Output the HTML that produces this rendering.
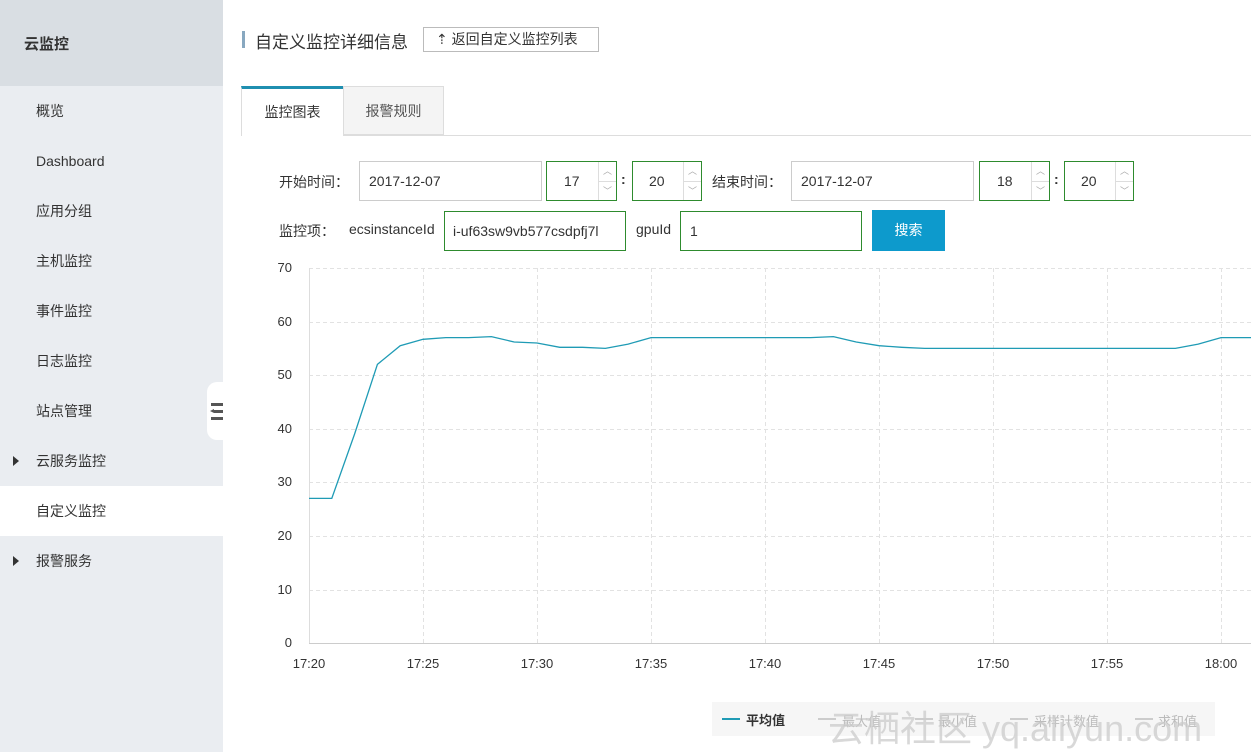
<!DOCTYPE html>
<html><head><meta charset="utf-8"><style>
*{margin:0;padding:0;box-sizing:border-box}
body{width:1251px;height:752px;overflow:hidden;background:#fff;font-family:"Liberation Sans","Noto Sans CJK SC",sans-serif;color:#333;position:relative;font-size:14px}
.abs{position:absolute}
#side{left:0;top:0;width:223px;height:752px;background:#eaedf1}
#side .hd{position:absolute;left:0;top:0;width:223px;height:86px;background:#d9dee3;font-size:15px;font-weight:bold;color:#333;padding:33px 0 0 24px}
.it{position:absolute;left:0;width:223px;height:50px;line-height:50px;padding-left:36px;font-size:14px;color:#333}
.it.act{background:#fff}
.tri{position:absolute;left:13px;top:20px;width:0;height:0;border-left:6px solid #333;border-top:5px solid transparent;border-bottom:5px solid transparent}
.box{position:absolute;border:1px solid #ccc;background:#fff;font-size:14px;color:#333;padding-left:9px}
.g{border-color:#2e8b2e}
.spin{position:absolute;right:0;top:0;width:18px;height:100%;border-left:1px solid #ddd;font-size:9px;color:#aaa;text-align:center}
.lbl{position:absolute;font-size:14px;color:#333}
.yl{position:absolute;left:270px;width:22px;text-align:right;font-size:13px;color:#333}
.xl{position:absolute;top:656px;font-size:13px;color:#333;width:50px;text-align:center}
.lg{position:absolute;top:711px;font-size:13px;color:#bbb}
.ll{position:absolute;top:718px;width:18px;height:2px;background:#ccc}
</style></head><body>
<div id="side" class="abs">
<div class="hd">云监控</div>
<div class="it" style="top:86px">概览</div>
<div class="it" style="top:136px">Dashboard</div>
<div class="it" style="top:186px">应用分组</div>
<div class="it" style="top:236px">主机监控</div>
<div class="it" style="top:286px">事件监控</div>
<div class="it" style="top:336px">日志监控</div>
<div class="it" style="top:386px">站点管理</div>
<div class="it" style="top:436px"><span class="tri"></span>云服务监控</div>
<div class="it act" style="top:486px">自定义监控</div>
<div class="it" style="top:536px"><span class="tri"></span>报警服务</div>
</div>
<div class="abs" style="left:207px;top:382px;width:20px;height:58px;background:#fff;border-radius:10px 0 0 10px"></div>
<div class="abs" style="left:211px;top:403px;width:12px;height:3px;background:#555"></div>
<div class="abs" style="left:214px;top:410px;width:9px;height:3px;background:#555"></div>
<div class="abs" style="left:210px;top:409px;width:0;height:0;border-right:4px solid #555;border-top:2.5px solid transparent;border-bottom:2.5px solid transparent"></div>
<div class="abs" style="left:211px;top:417px;width:12px;height:3px;background:#555"></div>

<div class="abs" style="left:242px;top:31px;width:3px;height:17px;background:#88a8c0"></div>
<div class="abs" style="left:255px;top:28px;font-size:17px;color:#333">自定义监控详细信息</div>
<div class="abs" style="left:423px;top:27px;width:176px;height:25px;border:1px solid #bbb;font-size:14px;line-height:23px;padding-left:12px;color:#333">⇡ 返回自定义监控列表</div>

<div class="abs" style="left:241px;top:135px;width:1010px;height:1px;background:#ddd"></div>
<div class="abs" style="left:241px;top:86px;width:102px;height:50px;background:#fff;border-left:1px solid #ddd;border-top:3px solid #1f8fb0;text-align:center;line-height:46px;font-size:14px">监控图表</div>
<div class="abs" style="left:343px;top:86px;width:101px;height:49px;background:#f4f4f4;border:1px solid #ddd;text-align:center;line-height:49px;font-size:14px;color:#555">报警规则</div>

<div class="lbl" style="left:279px;top:172px">开始时间：</div>
<div class="box" style="left:359px;top:161px;width:183px;height:40px;line-height:38px">2017-12-07</div>
<div class="box g" style="left:546px;top:161px;width:71px;height:40px;line-height:38px;padding-left:17px">17<div class="spin"><div style="height:19px;line-height:19px">︿</div><div style="border-top:1px solid #ddd;line-height:18px">﹀</div></div></div>
<div class="lbl" style="left:621px;top:171px;font-weight:bold">:</div>
<div class="box g" style="left:632px;top:161px;width:70px;height:40px;line-height:38px;padding-left:16px">20<div class="spin"><div style="height:19px;line-height:19px">︿</div><div style="border-top:1px solid #ddd;line-height:18px">﹀</div></div></div>
<div class="lbl" style="left:712px;top:172px">结束时间：</div>
<div class="box" style="left:791px;top:161px;width:183px;height:40px;line-height:38px">2017-12-07</div>
<div class="box g" style="left:979px;top:161px;width:71px;height:40px;line-height:38px;padding-left:17px">18<div class="spin"><div style="height:19px;line-height:19px">︿</div><div style="border-top:1px solid #ddd;line-height:18px">﹀</div></div></div>
<div class="lbl" style="left:1054px;top:171px;font-weight:bold">:</div>
<div class="box g" style="left:1064px;top:161px;width:70px;height:40px;line-height:38px;padding-left:16px">20<div class="spin"><div style="height:19px;line-height:19px">︿</div><div style="border-top:1px solid #ddd;line-height:18px">﹀</div></div></div>

<div class="lbl" style="left:279px;top:221px">监控项：</div>
<div class="lbl" style="left:349px;top:221px">ecsinstanceId</div>
<div class="box g" style="left:444px;top:211px;width:182px;height:40px;line-height:38px;padding-left:8px">i-uf63sw9vb577csdpfj7l</div>
<div class="lbl" style="left:636px;top:221px">gpuId</div>
<div class="box g" style="left:680px;top:211px;width:182px;height:40px;line-height:38px">1</div>
<div class="abs" style="left:872px;top:210px;width:73px;height:41px;background:#0d9acc;color:#fff;text-align:center;line-height:41px;font-size:14px">搜索</div>

<svg class="abs" style="left:0;top:0" width="1251" height="752">
<g stroke="#e2e2e2" stroke-width="1" stroke-dasharray="4,3">
<line x1="309" y1="268.5" x2="1251" y2="268.5"/><line x1="309" y1="322.5" x2="1251" y2="322.5"/><line x1="309" y1="375.5" x2="1251" y2="375.5"/><line x1="309" y1="429.5" x2="1251" y2="429.5"/><line x1="309" y1="482.5" x2="1251" y2="482.5"/><line x1="309" y1="536.5" x2="1251" y2="536.5"/><line x1="309" y1="590.5" x2="1251" y2="590.5"/>
<line x1="423.5" y1="268" x2="423.5" y2="643"/><line x1="537.5" y1="268" x2="537.5" y2="643"/><line x1="651.5" y1="268" x2="651.5" y2="643"/><line x1="765.5" y1="268" x2="765.5" y2="643"/><line x1="879.5" y1="268" x2="879.5" y2="643"/><line x1="993.5" y1="268" x2="993.5" y2="643"/><line x1="1107.5" y1="268" x2="1107.5" y2="643"/><line x1="1221.5" y1="268" x2="1221.5" y2="643"/>
</g>
<line x1="309.5" y1="268" x2="309.5" y2="643" stroke="#ddd"/>
<line x1="309" y1="643.5" x2="1251" y2="643.5" stroke="#ccc"/>
<polyline fill="none" stroke="#1f9bb5" stroke-width="1.3" points="309,498.4 331.8,498.4 354.6,434 377.4,364.4 400.2,345.7 423,339.3 445.8,337.6 468.6,337.6 491.4,336.6 514.2,342 537,343 559.8,347.3 582.6,347.3 605.4,348.4 628.2,344.1 651,337.6 810.6,337.6 833.4,336.6 856.2,342 879,345.7 901.8,347.3 924.6,348.4 1175.4,348.4 1198.2,344.1 1221,337.6 1251,337.6"/>
</svg>
<div class="yl" style="top:260px">70</div><div class="yl" style="top:314px">60</div><div class="yl" style="top:367px">50</div><div class="yl" style="top:421px">40</div><div class="yl" style="top:474px">30</div><div class="yl" style="top:528px">20</div><div class="yl" style="top:582px">10</div><div class="yl" style="top:635px">0</div>
<div class="xl" style="left:284px">17:20</div><div class="xl" style="left:398px">17:25</div><div class="xl" style="left:512px">17:30</div><div class="xl" style="left:626px">17:35</div><div class="xl" style="left:740px">17:40</div><div class="xl" style="left:854px">17:45</div><div class="xl" style="left:968px">17:50</div><div class="xl" style="left:1082px">17:55</div><div class="xl" style="left:1196px">18:00</div>

<div class="abs" style="left:712px;top:702px;width:503px;height:34px;background:#f6f6f6"></div>
<div class="abs" style="left:722px;top:718px;width:18px;height:2px;background:#1f9bb5"></div>
<div class="abs" style="left:746px;top:710px;font-size:13px;font-weight:bold;color:#333">平均值</div>
<div class="ll" style="left:818px"></div><div class="lg" style="left:842px">最大值</div>
<div class="ll" style="left:915px"></div><div class="lg" style="left:938px">最小值</div>
<div class="ll" style="left:1010px"></div><div class="lg" style="left:1034px">采样计数值</div>
<div class="ll" style="left:1135px"></div><div class="lg" style="left:1158px">求和值</div>
<div class="abs" style="left:828px;top:700px;font-size:36px;color:#ccc;opacity:.75;white-space:nowrap">云栖社区 yq.aliyun.com</div>
</body></html>
